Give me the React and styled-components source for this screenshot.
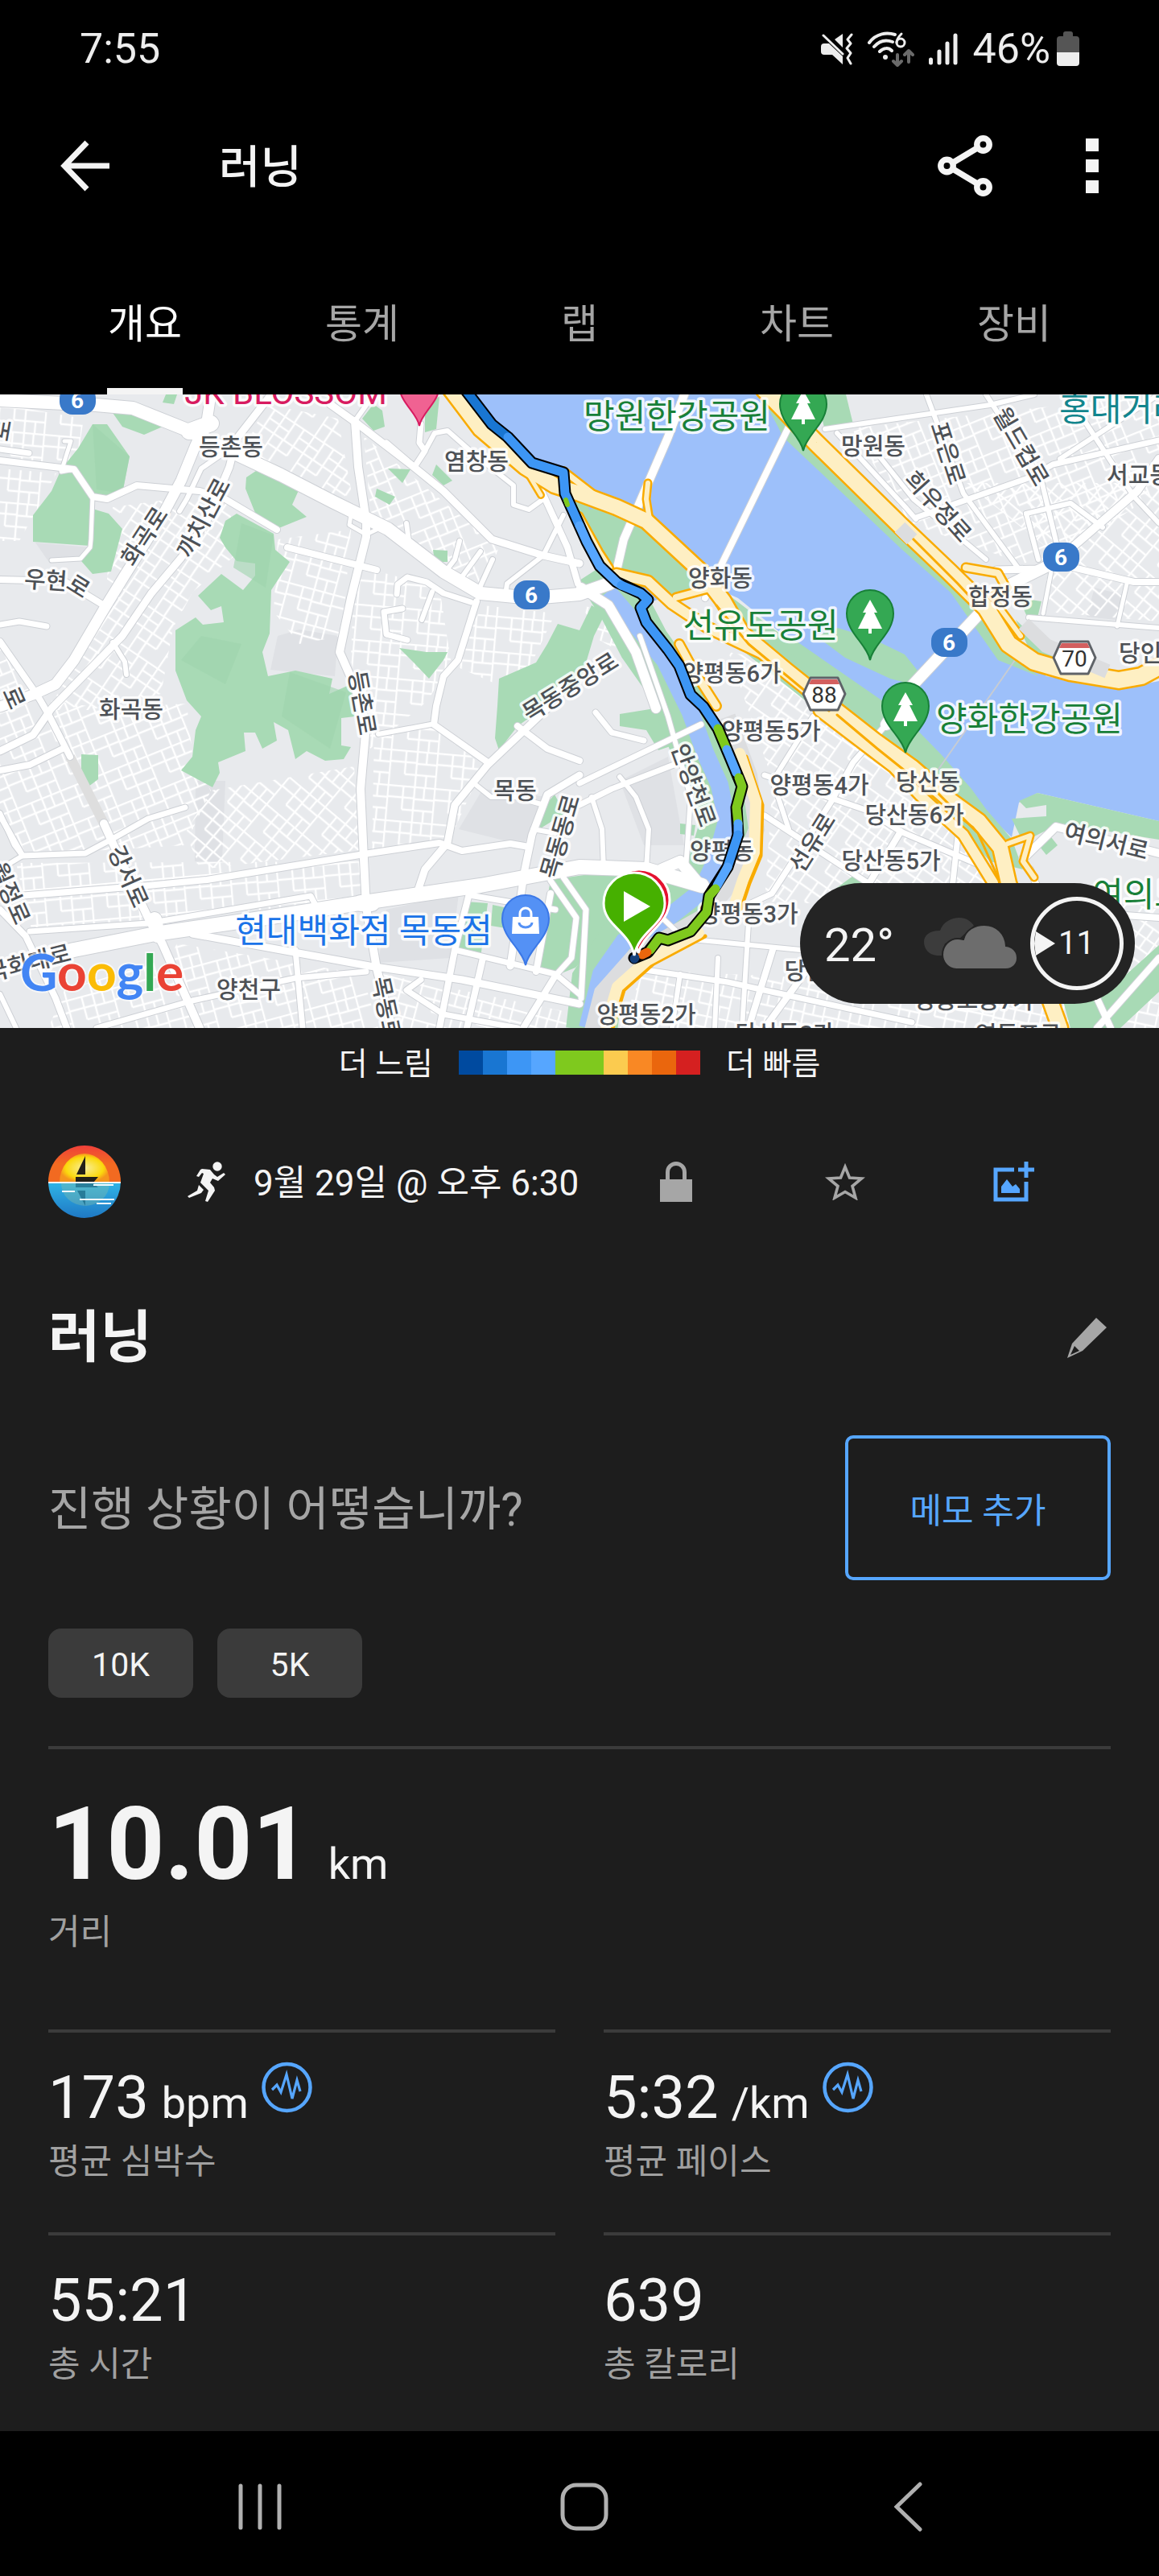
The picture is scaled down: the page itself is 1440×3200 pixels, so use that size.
import React, { useState } from "react";
import styled, { createGlobalStyle } from "styled-components";

const GlobalStyle = createGlobalStyle`
  *, *::before, *::after { box-sizing: border-box; }
  body {
    margin: 0;
    background: #000;
    color: #f4f4f4;
    font-family: Roboto, "Noto Sans CJK KR", sans-serif;
  }
  button { border: 0; padding: 0; background: none; color: inherit; font: inherit; cursor: pointer; }
  h1, h2, p, dl, dt, dd { margin: 0; font-weight: 400; }
  svg { display: block; flex: none; }
`;

const Screen = styled.div`
  display: flex;
  flex-direction: column;
  background: #1d1d1d;
`;

/* ---------- top chrome ---------- */

const Top = styled.header`
  background: #000;
`;

const StatusBar = styled.div`
  display: flex;
  align-items: center;
  justify-content: space-between;
  height: 122px;
  padding: 0 99px;
  font-size: 52px;
  line-height: 60px;
  color: #ededed;
`;

const StatusIcons = styled.div`
  display: flex;
  align-items: center;
  gap: 18px;
`;

const Charge = styled.span`
  display: flex;
  align-items: center;
  gap: 8px;
`;

const AppBar = styled.div`
  display: flex;
  align-items: center;
  height: 168px;
  padding: 0 75px 0 70px;
`;

const AppTitle = styled.h1`
  flex: 1;
  margin-left: 134px;
  padding-top: 4px;
  font-size: 56px;
  font-weight: 500;
  line-height: 72px;
`;

const IconButton = styled.button`
  display: flex;
  align-items: center;
  justify-content: center;
`;

const BarActions = styled.div`
  display: flex;
  align-items: center;
  gap: 116px;
`;

const Tabs = styled.nav`
  display: grid;
  grid-template-columns: repeat(5, 1fr);
  height: 200px;
  padding: 0 45px;
`;

const Tab = styled.button`
  display: flex;
  justify-content: center;
  font-size: 50px;
  color: ${(p) => (p.$active ? "#fff" : "#a6a6a6")};

  span {
    display: flex;
    align-items: center;
    padding: 24px 1px 0;
    border-bottom: 8px solid ${(p) => (p.$active ? "#f4f4f4" : "transparent")};
  }
`;

/* ---------- map ---------- */

const MapBox = styled.section`
  position: relative;
  height: 787px;
  overflow: hidden;
  background: #e8eaed;
`;

const MapCanvas = styled.svg`
  width: 100%;
  height: 100%;
`;

const MapLabel = styled.text`
  font-family: Roboto, "Noto Sans CJK KR", sans-serif;
  font-size: ${(p) => (p.$place ? 42 : 29)}px;
  font-weight: ${(p) => (p.$place ? 400 : 500)};
  fill: ${(p) => p.$color || "#4d5156"};
  stroke: #fff;
  stroke-opacity: 0.85;
  stroke-width: 7px;
  stroke-linejoin: round;
  paint-order: stroke;
  text-anchor: ${(p) => p.$anchor || "middle"};
`;

const BadgeText = styled.text`
  font-family: Roboto, sans-serif;
  font-size: 28px;
  font-weight: ${(p) => (p.$bold ? 700 : 400)};
  fill: ${(p) => p.$color};
  text-anchor: middle;
`;

const Wordmark = styled.text`
  font-family: Lato, sans-serif;
  font-size: 64px;
  font-weight: 700;
  paint-order: stroke;
  stroke: #fff;
  stroke-opacity: 0.6;
  stroke-width: 4px;
`;

const Weather = styled.div`
  position: absolute;
  right: 30px;
  bottom: 30px;
  display: flex;
  align-items: center;
  width: 416px;
  height: 150px;
  padding: 0 14px 0 30px;
  border-radius: 75px;
  background: #242424;
`;

const Temperature = styled.span`
  flex: 1;
  padding-top: 3px;
  font-size: 58px;
  line-height: 68px;
`;

const Wind = styled.div`
  display: flex;
  align-items: center;
  width: 116px;
  height: 116px;
  margin-left: 16px;
  border: 5px solid #f4f4f4;
  border-radius: 50%;
  font-size: 40px;
  line-height: 48px;

  svg { margin-right: 4px; }
`;

/* ---------- details ---------- */

const Legend = styled.div`
  display: flex;
  align-items: center;
  justify-content: center;
  gap: 32px;
  height: 86px;
  font-size: 39px;
  line-height: 56px;

  span { padding-top: 3px; }
`;

const Scale = styled.div`
  display: flex;
  width: 300px;
  height: 30px;
`;

const ScaleStep = styled.i`
  flex: 1;
  background: ${(p) => p.$color};
`;

const Details = styled.main`
  display: flex;
  flex-direction: column;
  padding: 60px 60px 53px;
`;

const MetaRow = styled.div`
  display: flex;
  align-items: center;
  height: 90px;
  padding-right: 15px;
`;

const When = styled.p`
  display: flex;
  align-items: center;
  flex: 1;
  gap: 34px;
  margin-left: 83px;
  font-size: 44px;
  line-height: 64px;
  white-space: nowrap;

  time { padding-top: 3px; }
`;

const MetaActions = styled.div`
  display: grid;
  grid-template-columns: repeat(3, 210px);
`;

const TitleRow = styled.div`
  display: flex;
  align-items: center;
  justify-content: space-between;
  height: 90px;
  margin-top: 104px;
`;

const Title = styled.h2`
  font-size: 70px;
  font-weight: 700;
  line-height: 90px;
`;

const NoteRow = styled.div`
  display: flex;
  align-items: center;
  justify-content: space-between;
  margin-top: 76px;
`;

const Prompt = styled.p`
  padding-top: 4px;
  font-size: 58px;
  line-height: 84px;
  color: #a5a5a5;
`;

const NoteButton = styled.button`
  width: 330px;
  height: 180px;
  border: 4px solid #56a6ff;
  border-radius: 10px;
  font-size: 43px;
  color: #56a6ff;
`;

const Chips = styled.div`
  display: flex;
  gap: 30px;
  margin-top: 60px;
`;

const Chip = styled.button`
  width: 180px;
  height: 86px;
  padding-top: 3px;
  border-radius: 16px;
  background: #3b3b3b;
  font-size: 41px;
`;

const Distance = styled.dl`
  display: flex;
  flex-direction: column-reverse;
  justify-content: flex-end;
  height: 352px;
  margin-top: 60px;
  padding-top: 43px;
  border-top: 4px solid #3b3b3b;
`;

const DistanceValue = styled.dd`
  display: flex;
  align-items: baseline;
  gap: 22px;
  font-size: 126px;
  font-weight: 700;
  line-height: 150px;
`;

const Unit = styled.span`
  font-size: 54px;
  font-weight: 400;
  line-height: 60px;
`;

const Caption = styled.dt`
  margin-top: 4px;
  font-size: 43px;
  line-height: 60px;
  color: #a0a0a0;
`;

const Metrics = styled.dl`
  display: grid;
  grid-template-columns: 1fr 1fr;
  gap: 58px 60px;
`;

const Metric = styled.div`
  display: flex;
  flex-direction: column-reverse;
  padding-top: 36px;
  border-top: 4px solid #3b3b3b;
`;

const MetricValue = styled.dd`
  display: flex;
  align-items: baseline;
  gap: 16px;
  font-size: 74px;
  line-height: 90px;

  svg { align-self: flex-start; }
`;

const NavBar = styled.nav`
  display: grid;
  grid-template-columns: repeat(3, 1fr);
  height: 180px;
  padding: 8px 110px 0 122px;
  background: #000;
`;

/* ---------- map data ---------- */

const blocks = [
  ["g5", "0,12 104,30 95,88 0,78"],
  ["g5", "0,92 70,98 42,150 24,182 0,182"],
  ["gm58", "140,140 228,128 285,134 292,200 240,245 215,290 200,372 110,392 60,392 130,268"],
  ["gm20", "0,310 60,380 130,390 232,384 240,455 262,492 230,560 30,572 0,530"],
  ["g40", "262,492 440,462 446,566 250,590 230,545"],
  ["gm5", "20,582 448,580 450,628 40,668"],
  ["gm15", "220,682 450,720 470,787 60,787 80,740 210,700"],
  ["g15", "345,180 436,168 425,300 372,310 340,270"],
  ["gm58", "330,12 420,30 442,150 300,76"],
  ["gm20", "452,52 620,190 600,240 462,165"],
  ["g5", "440,212 546,240 560,330 532,380 460,440 436,330"],
  ["g5", "465,420 540,412 600,462 558,555 462,568"],
  ["g5", "600,262 690,272 660,335 640,370 560,335"],
  ["g15", "475,720 720,770 720,787 500,787"],
  ["g15", "722,262 760,270 790,330 735,300"],
  ["gm20", "1058,42 1440,0 1440,120 1320,200 1270,210 1130,160"],
  ["g40", "1200,110 1440,110 1440,282 1300,270 1300,190"],
  ["g35", "905,320 960,330 1070,420 1225,590 1225,640 950,630 960,480"],
  ["g12", "800,715 1440,745 1440,787 770,787"],
  ["g35", "1300,610 1440,640 1440,720 1300,720"],
];

const shades = [
  "44,184 112,190 100,206 62,210",
  "345,300 372,292 420,300 416,350 336,342",
  "243,480 280,480 276,580 242,580",
  "480,640 570,620 560,700 470,706",
  "600,490 680,500 650,560 570,540",
  "770,480 830,450 850,560 800,560",
  "1360,240 1400,250 1386,280 1350,276",
];

const parks = [
  "115,37 133,37 161,77 152,123 133,130 118,126 115,142 135,148 152,167 138,220 115,223 101,207 112,188 41,183 41,150 64,120 76,93 97,67",
  "138,20 170,23 202,40 179,50 152,40",
  "321,93 363,110 372,117 363,137 381,152 344,167 317,147 305,117 306,103",
  "294,148 340,173 342,193 360,208 337,243 335,297 326,320 333,350 367,343 413,353 409,372 436,360 441,400 424,402 424,436 436,438 427,453 404,455 381,443 367,453 358,417 340,407 344,430 326,440 317,420 303,420 305,443 271,457 273,470 264,488 225,467 239,450 243,417 250,400 232,380 218,343 218,293 243,277 252,286 278,283 275,263 262,268 246,250 275,223 302,243 317,225 317,210 294,207 280,190 273,178 280,157",
  "206,0 220,0 216,12 202,10",
  "464,12 475,20 478,40 464,45 450,30",
  "482,92 510,93 500,110",
  "468,117 491,127 484,137 466,127",
  "542,87 562,107 551,113 537,100",
  "528,8 546,3 542,43 528,47",
  "496,315 530,320 556,320 551,330 533,353 514,333",
  "538,193 556,194 556,208 540,208",
  "693,285 720,293 735,262 752,272 738,300 720,360 660,400 643,412 620,442 615,427 618,387 620,353 666,333 680,310",
  "684,603 760,592 830,620 800,655 735,690 715,712 690,722 668,712 676,650",
  "579,630 606,632 597,700 565,693 569,657",
  "612,634 640,640 634,664 610,660",
  "101,447 122,448 122,478 110,487 101,470",
  "689,497 702,520 670,540 675,513",
  "770,397 826,388 845,433 818,442 803,417 770,412",
  "845,533 864,535 862,548 845,546",
  "1014,0 1051,0 1060,37 1025,45",
  "1266,253 1294,257 1289,277 1276,276",
  "1262,280 1312,326 1285,330",
  "1320,750 1400,720 1440,684 1440,742 1392,787 1330,787",
  "1030,620 1060,598 1090,620",
  "1292,562 1306,550 1314,560 1300,572",
];

const roads = [
  [16, "0,7 119,13 165,17 230,43 285,70 349,100 413,133 482,167 551,220 597,247 661,253 720,248 757,235"],
  [20, "235,46 262,36"],
  [13, "262,0 257,33 243,63 225,107 202,150 156,223 129,267 92,330 69,360 41,373 0,388"],
  [9, "340,-4 294,55 285,90 257,157 225,203 188,247 152,300 110,343 64,390 41,423 0,443"],
  [8, "0,82 92,93 115,127 133,130 170,113 248,120 280,130 344,168"],
  [5, "92,93 76,96 88,58 80,58"],
  [7, "0,68 36,73"],
  [5, "115,127 113,180 112,190 100,204 64,206"],
  [8, "0,230 80,232 129,262"],
  [7, "0,286 24,282 58,288"],
  [6, "276,74 250,92 232,130 223,145"],
  [6, "140,308 155,332 157,348"],
  [10, "441,33 445,90 455,157 455,177 436,253 422,320 441,363 455,410 448,490 452,577 455,637 468,713 487,787"],
  [20, "448,632 462,632"],
  [8, "357,190 468,218"],
  [5, "436,150 434,162 455,174 474,165"],
  [18, "0,712 92,690 193,670 331,650 459,630 597,610 720,587 803,590 872,610"],
  [8, "23,623 184,610 257,603 459,570 546,557 574,567 634,558 657,562"],
  [9, "410,12 445,37 514,90 551,120 611,180 675,200 720,210"],
  [7, "523,37 521,60 528,70 515,90 480,60"],
  [6, "528,70 540,48 556,45 590,75 638,113 638,137 657,143 675,130"],
  [6, "441,33 468,-5"],
  [8, "672,118 705,190 718,235"],
  [6, "700,150 675,200 630,235 628,250"],
  [6, "505,160 508,182"],
  [6, "571,182 565,205 555,218"],
  [6, "612,205 596,240"],
  [6, "597,195 570,232"],
  [7, "493,248 494,236 506,227 530,233 551,247 585,258"],
  [6, "537,245 524,280"],
  [7, "500,266 477,270 480,298 506,305"],
  [8, "592,257 569,330 551,350 542,387 539,410 606,457"],
  [6, "470,422 535,410"],
  [9, "700,360 680,390 606,460 565,510 556,557 528,590 519,617"],
  [8, "643,412 680,440 720,455"],
  [9, "720,473 680,497 661,547 652,590 634,710"],
  [6, "590,484 610,500 640,500 676,510"],
  [6, "662,540 690,545"],
  [8, "684,620 666,717"],
  [8, "60,397 87,450"],
  [8, "0,307 46,373 60,397"],
  [10, "129,533 138,553 184,650 202,683 248,787"],
  [18, "192,652 196,672"],
  [8, "0,467 37,460 78,440"],
  [7, "0,523 28,573 106,570 138,553 184,527 230,513"],
  [6, "0,520 18,560 28,573 0,590"],
  [8, "0,640 32,673 69,750 83,787"],
  [6, "0,745 20,787"],
  [7, "37,667 184,657 386,623 395,640"],
  [9, "239,670 459,710 574,727 720,757"],
  [7, "120,787 239,753 367,725 455,717"],
  [7, "367,690 376,787"],
  [8, "583,620 565,690 546,787"],
  [7, "583,622 690,640"],
  [7, "565,690 690,720 720,745"],
  [8, "600,700 580,787"],
  [7, "523,727 505,740 551,770 643,787"],
  [8, "690,722 650,787"],
  [7, "690,722 710,700 716,650 684,604"],
  [7, "722,750 728,640 700,600"],
  [7, "720,483 871,410"],
  [7, "720,510 760,490 850,455"],
  [6, "770,475 790,500 806,540 803,590"],
  [6, "735,500 748,540 750,590"],
  [7, "740,395 760,420 800,430"],
  [6, "795,300 830,400 858,500 852,590"],
  [12, "722,240 756,262 790,320 815,390"],
  [14, "822,590 845,580 870,610"],
  [7, "788,713 904,730 995,750 1133,780"],
  [6, "812,640 850,676 995,690"],
  [7, "931,633 959,620 1032,507 1060,457 1101,410"],
  [8, "1119,543 1074,617 950,787"],
  [7, "950,473 1078,517 1119,543 1230,590"],
  [7, "950,523 1083,610"],
  [6, "931,640 922,787"],
  [6, "980,540 960,480 1010,400"],
  [6, "845,720 835,787"],
  [6, "892,700 888,787"],
  [8, "960,690 930,787"],
  [7, "1190,550 1180,640"],
  [10, "1271,577 1312,537 1440,570"],
  [8, "1280,590 1300,640 1440,650"],
  [8, "1340,700 1380,787"],
  [8, "1440,700 1363,787"],
  [10, "1440,80 1413,120 1317,203"],
  [8, "1312,210 1409,233 1440,233"],
  [6, "1025,43 1230,13 1285,0"],
  [7, "1138,153 1280,103 1308,87 1440,57"],
  [6, "1225,0 1294,107 1317,203"],
  [6, "1151,0 1197,123 1266,217"],
  [6, "1087,70 1135,130 1225,205"],
  [6, "1040,48 1125,140 1138,155"],
  [6, "1326,0 1409,127 1440,160"],
  [6, "1317,80 1440,0"],
  [6, "1275,148 1330,135 1370,165"],
  [6, "1275,148 1290,205"],
  [6, "1278,277 1440,290"],
  [5, "1296,272 1306,220"],
  [5, "1400,235 1388,288"],
  [9, "1238,218 1290,217 1312,208"],
  [10, "851,-2 830,53 775,180 764,228"],
  [8, "985,30 876,253"],
  [14, "1312,208 1257,235 1216,273 1133,362 1101,410"],
];

const highways = [
  [18, "560,-6 597,43 652,90 689,113 720,123 766,140 803,157 871,220 899,257 922,297 977,343 1032,387 1087,430 1133,463 1179,503 1216,530 1243,563 1253,607 1294,723 1317,787"],
  [7, "700,95 735,122 760,140"],
  [6, "805,110 803,130 807,155 876,235"],
  [12, "766,223 805,232 835,260 880,290 950,323"],
  [8, "840,252 885,240 905,262"],
  [12, "1018,393 1060,425 1110,463 1142,497 1197,547 1234,607"],
  [9, "844,310 862,343 890,387"],
  [5, "648,85 672,125"],
  [5, "720,150 745,195 758,215"],
  [20, "950,-6 1014,60 1119,163 1179,220 1225,265 1253,310 1285,332 1330,345 1390,355 1418,350 1440,338"],
  [8, "1200,215 1240,222 1250,240 1235,250"],
  [6, "1216,265 1240,262 1268,300"],
  [6, "1252,558 1280,548 1271,580 1285,600"],
];

const sideRoads = [
  "927,450 947,510 945,573 931,607 920,640",
  "876,673 812,707 775,740 761,787",
];

const route =
  "578,-6 611,37 631,53 661,85 700,97 702,123 720,163 729,183 745,213 766,233 796,247 805,255 796,265 803,283 830,317 844,337 858,373 874,388 892,415 908,453 922,487 915,513 917,547 904,587 881,623 878,643 858,667 830,678 819,675 805,693 788,700";

const paceRuns = [
  ["#1976d2", "578,-6 611,37 631,53"],
  ["#3d96f5", "631,53 661,85 700,97 702,123 720,163"],
  ["#56a6ff", "720,163 729,183 745,213 766,233 772,237"],
  ["#3d96f5", "772,237 796,247 805,255 796,265 803,283 830,317 844,337 858,373 874,388 892,415"],
  ["#7fc91e", "892,415 903,441"],
  ["#56a6ff", "903,441 908,453 915,470"],
  ["#7fc91e", "918,476 922,487 915,513 917,533"],
  ["#56a6ff", "917,533 917,547"],
  ["#3d96f5", "917,547 904,587"],
  ["#56a6ff", "904,587 891,610"],
  ["#7fc91e", "889,614 881,623 878,643 858,667 830,678 819,675 808,690"],
  ["#ea660d", "804,693 798,696"],
  ["#16407a", "789,700 788,701"],
];

const areaLabels = [
  ["등촌동", 287, 76], ["염창동", 592, 94], ["망원동", 1085, 75], ["합정동", 1243, 262],
  ["양화동", 895, 239], ["양평동6가", 909, 357], ["양평동5가", 958, 429], ["양평동4가", 1018, 496],
  ["당산동", 1153, 492], ["당산동6가", 1136, 533], ["당산동5가", 1107, 590], ["양평동", 897, 578],
  ["양평동3가", 930, 656], ["양평동2가", 803, 781], ["당산동3가", 975, 805], ["영등포동7가", 1210, 763],
  ["영등포구", 1265, 806], ["화곡동", 163, 402], ["목동", 640, 503], ["양천구", 309, 750],
  ["당산동4가", 1036, 727], ["서교동", 1415, 111], ["당인동", 1430, 332],
];

const streetLabels = [
  ["화곡로", 188, 182, -57], ["까치산로", 262, 158, -62], ["우현", 56, 241, 4], ["로", 92, 247, 32],
  ["등촌로", 440, 385, 80], ["강서로", 150, 603, 66], ["목동중앙로", 714, 372, -32],
  ["목동동로", 706, 552, -74], ["목동로", 470, 765, 78], ["안양천로", 852, 489, 70],
  ["선유로", 1018, 562, -58], ["여의서로", 1372, 565, 14], ["월드컵로", 1260, 70, 60],
  ["포은로", 1168, 76, 72], ["희우정로", 1158, 146, 48], ["월정로", 3, 624, 66],
  ["국회대로", 38, 716, -14], ["로", 8, 381, 66], ["로", 12, 46, -80],
];

const places = [
  ["JK BLOSSOM", 355, 12, "#d81b60"],
  ["망원한강공원", 841, 42, "#188038"],
  ["선유도공원", 945, 302, "#188038"],
  ["양화한강공원", 1279, 418, "#188038"],
  ["현대백화점 목동점", 452, 681, "#1a73e8"],
];

const paceScale = ["#004a9f", "#1976d2", "#3d96f5", "#56a6ff", "#7fc91e", "#7fc91e", "#fbcb4f", "#f98824", "#ea660d", "#d52020"];

const gridAngles = { g5: 5, g12: 12, g15: 15, g35: 35, g40: 40, gm5: -5, gm15: -15, gm20: -22, gm58: -56 };

function ParkPin({ x, y }) {
  return (
    <g transform={`translate(${x} ${y})`}>
      <path d="M0 0C-4-20-29-34-29-58a29 29 0 0 1 58 0C29-34 4-20 0 0Z" fill="#34a853" stroke="#188038" strokeWidth="2" />
      <path d="M0-75 9-59H5L15-39H2v6h-4v-6h-13L-5-59h-4Z" fill="#fff" />
    </g>
  );
}

function SubwayBadge({ x, y }) {
  return (
    <g transform={`translate(${x} ${y})`}>
      <rect x="-22" y="-18" width="45" height="36" rx="16" fill="#3979c9" />
      <BadgeText y="10" $bold $color="#fff">6</BadgeText>
    </g>
  );
}

function Shield({ x, y, label }) {
  return (
    <g transform={`translate(${x} ${y})`}>
      <path d="M-17-20H17L26 0 17 20H-17L-26 0Z" fill="#fff" stroke="#5f6368" strokeWidth="3" strokeLinejoin="round" />
      <path d="M-16-18H16L19-12H-19Z" fill="#d35f5f" />
      <BadgeText y="11" $color="#333">{label}</BadgeText>
    </g>
  );
}

function RouteMap() {
  return (
    <MapCanvas viewBox="0 0 1440 787" preserveAspectRatio="xMidYMid slice" role="img" aria-label="러닝 경로 지도">
      <defs>
        {Object.entries(gridAngles).map(([id, angle]) => (
          <pattern key={id} id={id} width="58" height="44" patternUnits="userSpaceOnUse" patternTransform={`rotate(${angle})`}>
            <path d="M0 1H58M0 15H34M20 30H58M1 0V44M20 0V30M34 1V44M47 30V44M46 1V15M34 16H58" fill="none" stroke="#fff" strokeWidth="2.4" />
          </pattern>
        ))}
      </defs>
      <rect width="1440" height="787" fill="#e8eaed" />
      {shades.map((d) => <polygon key={d} points={d} fill="#dfe1e5" />)}
      {blocks.map(([id, d]) => <polygon key={d} points={d} fill={`url(#${id})`} />)}
      {parks.map((d) => <polygon key={d} points={d} fill="#a8dab5" />)}
      <path d="M115 37 161 77 152 123 120 118ZM300 160 340 175 330 240 290 215ZM250 300 300 310 280 360 225 330ZM360 345 430 370 410 440 350 400Z" fill="#9fd3ad" opacity=".6" />

      {/* river, its banks and the island */}
      <path d="M588 0H972L1120 190 1257 310 1300 350 1390 366 1440 356V530L1289 495 1266 507 1257 550 1110 410 917 253 870 232 800 262 770 240 700 130 660 90Z" fill="#9dc0fa" />
      <path d="M945 0H975L1014 50 1119 160 1253 318 1290 350 1240 330 1179 243 1120 190 972 50Z" fill="#a8dab5" />
      <path d="M950 0 972 52 1120 192 1180 245 1262 335 1210 240 1010 40Z" fill="#a8dab5" />
      <path d="M724 147 745 138 798 160 871 217 895 230 876 246 840 254 807 238 766 220 748 197Z" fill="#a8dab5" />
      <path d="M705 110 722 112 735 150 760 215 740 215 712 160Z" fill="#a8dab5" />
      <path d="M900 245 959 290 1041 347 1110 392 1133 410 1170 448 1207 490 1225 515 1257 552 1271 590 1230 580 1130 470 1000 380 900 300Z" fill="#a8dab5" />
      <path d="M1014 300 1041 290 1083 303 1124 323 1140 343 1133 360 1106 353 1050 327ZM940 290 980 300 1110 390 1060 380Z" fill="#a8dab5" />
      <path d="M1257 527 1300 524 1300 510 1275 514 1266 505 1289 495 1440 530V553L1317 533 1271 556Z" fill="#a8dab5" />

      {/* stream */}
      <path d="M745 215 775 262 800 310 835 360 862 430 892 480 900 540 882 600 830 648 775 680 742 730 735 790" fill="none" stroke="#a8dab5" strokeWidth="64" />
      <path d="M755 245 789 285 826 330 858 395 876 445 894 485 903 530 890 577 872 617 830 650 775 680 747 720 730 787" fill="none" stroke="#9dc0fa" strokeWidth="22" />
      <path d="M904 400 931 473 940 540 917 597 872 650 789 697 748 743 736 790" fill="none" stroke="#dcdddf" strokeWidth="20" />
      <path d="M87 450 129 533" stroke="#dedede" strokeWidth="12" />
      <path d="M1266 323 1165 467" stroke="#c7ccd3" strokeWidth="2" />

      <g fill="none" strokeLinejoin="round" strokeLinecap="round">
        {roads.map(([w, d]) => <polyline key={d} points={d} stroke="#cdd0d5" strokeWidth={w + 2} />)}
        {roads.map(([w, d]) => <polyline key={d} points={d} stroke="#fff" strokeWidth={w} />)}
        {sideRoads.map((d) => <polyline key={d} points={d} stroke="#f9ab00" strokeWidth="5" />)}
        {sideRoads.map((d) => <polyline key={d} points={d} stroke="#feefc3" strokeWidth="14" transform="translate(-8 -4)" />)}
        {highways.map(([w, d]) => <polyline key={d} points={d} stroke="#f9ab00" strokeWidth={w + 5} />)}
        {highways.map(([w, d]) => <polyline key={d} points={d} stroke="#feefc3" strokeWidth={w} />)}
        <path d="M890 262 930 310 1030 393M1040 398 1090 440 1140 480M1130 175 1190 235 1215 262M1150 480 1215 545 1240 600" stroke="#f9ab00" strokeWidth="3" />
      </g>
      <path d="M1118 165 1133 180M1272 285 1300 312 1376 344" fill="none" stroke="#dcdddf" strokeWidth="18" />

      {streetLabels.map(([t, x, y, a]) => (
        <MapLabel key={t + x} transform={`translate(${x} ${y}) rotate(${a})`}>{t}</MapLabel>
      ))}
      {areaLabels.map(([t, x, y]) => <MapLabel key={t + x} x={x} y={y}>{t}</MapLabel>)}
      {places.map(([t, x, y, c]) => <MapLabel key={t} x={x} y={y} $place $color={c}>{t}</MapLabel>)}
      <MapLabel x="1316" y="33" $place $anchor="start" $color="#12858d">홍대거리</MapLabel>
      <MapLabel x="1357" y="636" $place $anchor="start" $color="#188038">여의도</MapLabel>

      <SubwayBadge x={96} y={7} />
      <SubwayBadge x={660} y={249} />
      <SubwayBadge x={1318} y={202} />
      <SubwayBadge x={1179} y={308} />
      <Shield x={1335} y={327} label="70" />
      <Shield x={1024} y={372} label="88" />

      <ParkPin x={998} y={70} />
      <ParkPin x={1081} y={330} />
      <ParkPin x={1125} y={445} />
      <path d="M521 39C518 22 496 10 496-12H546C546 10 524 22 521 39Z" fill="#f06292" stroke="#d81b60" strokeWidth="2" />
      <g transform="translate(653 709)">
        <path d="M0 0C-4-20-29-34-29-58a29 29 0 0 1 58 0C29-34 4-20 0 0Z" fill="#5491f5" stroke="#3b78e7" strokeWidth="2" />
        <path d="M-16-60H16L17-39H-17Z" fill="#fff" />
        <path d="M-7-58v-6a7 7 0 0 1 14 0v6" fill="none" stroke="#fff" strokeWidth="3" />
        <path d="M-8-53a8 6 0 0 0 16 0" fill="none" stroke="#5491f5" strokeWidth="3" />
      </g>

      <g fill="none" strokeLinejoin="round" strokeLinecap="round">
        <polyline points={route} stroke="#000" strokeWidth="15" />
        {paceRuns.map(([c, d]) => <polyline key={d} points={d} stroke={c} strokeWidth="11" />)}
        <path d="M703 131l2 6" stroke="#7fc91e" strokeWidth="6" />
      </g>

      <path d="M793 694C789 668 756 658 756 628a38 38 0 0 1 76 0c0 30-32 40-39 66Z" fill="#e4122f" stroke="#fff" strokeWidth="3" />
      <path d="M788 697C782 666 750 660 750 632a38 38 0 0 1 76 0c0 28-32 34-38 65Z" fill="#46b000" stroke="#fff" strokeWidth="3" />
      <path d="M775 617 808 636 775 655Z" fill="#fff" />

      <Wordmark x="25" y="741">
        <tspan fill="#4285f4">G</tspan><tspan fill="#ea4335">o</tspan><tspan fill="#fbbc05">o</tspan>
        <tspan fill="#4285f4">g</tspan><tspan fill="#34a853">l</tspan><tspan fill="#ea4335">e</tspan>
      </Wordmark>
    </MapCanvas>
  );
}

/* ---------- icons ---------- */

const MuteIcon = () => (
  <svg width="40" height="40" viewBox="0 0 40 40" fill="#ededed">
    <path d="M0 17a4 4 0 0 1 4-4h6L27 29v10L14 27H4a4 4 0 0 1-4-4ZM17 8 27 1V18Z" />
    <path d="M3 3 27 26M38 2l-5 6 4 5-5 6 5 6-4 6 4 7" fill="none" stroke="#ededed" strokeWidth="3" strokeLinecap="round" strokeLinejoin="round" />
  </svg>
);

const WifiIcon = () => (
  <svg width="58" height="44" viewBox="0 0 58 44" fill="none" strokeLinecap="round" strokeLinejoin="round">
    <path d="M2 14C11 2 24 1 34 4M8 19c7-8 15-9 23-6M15 25c5-5 11-5 15-1" stroke="#ededed" strokeWidth="4" />
    <circle cx="22" cy="32" r="3" fill="#ededed" />
    <path d="M42 3c-4 4-6 8-6 11" stroke="#ededed" strokeWidth="3" />
    <circle cx="41" cy="14" r="5" stroke="#ededed" strokeWidth="3" />
    <path d="M37 29v12M32 37l5 5 5-5M51 38V25M46 29l5-5 5 5" stroke="#6a6a6a" strokeWidth="4" />
  </svg>
);

const SignalIcon = () => (
  <svg width="36" height="40" viewBox="0 0 36 40" stroke="#ededed" strokeWidth="5" strokeLinecap="round">
    <path d="M2.500 33v4M13 23v14M23 13v24M33 3v34" />
  </svg>
);

const BatteryIcon = () => (
  <svg width="28" height="44" viewBox="0 0 28 44">
    <path d="M8 3a3 3 0 0 1 3-3h6a3 3 0 0 1 3 3v3h4a4 4 0 0 1 4 4v17H0V10a4 4 0 0 1 4-4h4Z" fill="#555" />
    <path d="M0 26h28v13a4 4 0 0 1-4 4H4a4 4 0 0 1-4-4Z" fill="#ededed" />
  </svg>
);

const BackArrow = () => (
  <svg width="68" height="64" viewBox="0 0 68 64" fill="none" stroke="#f4f4f4" strokeWidth="7">
    <path d="M38 3 10 32 38 61M11 32H66" />
  </svg>
);

const ShareIcon = () => (
  <svg width="68" height="76" viewBox="0 0 68 76" fill="none" stroke="#f4f4f4" strokeWidth="7.5">
    <circle cx="56.500" cy="11.500" r="7.700" />
    <circle cx="11.500" cy="38" r="7.700" />
    <circle cx="56.500" cy="64.500" r="7.700" />
    <path d="M19 34 49 16M19 42 49 60" />
  </svg>
);

const MoreIcon = () => (
  <svg width="16" height="70" viewBox="0 0 16 70" fill="#f4f4f4">
    <path d="M0 1h16v16H0zM0 27h16v16H0zM0 53h16v16H0z" />
  </svg>
);

const CloudIcon = () => (
  <svg width="116" height="64" viewBox="0 0 116 64">
    <path d="M16 47C6 46 0 39 0 30 0 22 7 16 20 16 24 5 34 0 44 0 52 0 58 4 62 10L44 26 26 32 22 47Z" fill="#3c3c3c" />
    <path d="M40 64A18 18 0 0 1 23 46C23 34 32 26 42 26 46 26 48 27 49 27 52 15 63 9 75 9 90 9 101 20 102 35 110 36 116 42 116 50 116 58 110 64 102 64Z" fill="#6d6d6d" stroke="#242424" strokeWidth="2" />
  </svg>
);

const Avatar = () => (
  <svg width="90" height="90" viewBox="0 0 90 90" role="img" aria-label="프로필">
    <defs>
      <clipPath id="disc"><circle cx="45" cy="45" r="45" /></clipPath>
      <linearGradient id="sky" x2="0" y2="1"><stop stopColor="#f0403a" /><stop offset=".5" stopColor="#f26a21" /></linearGradient>
      <linearGradient id="sea" x2="0" y2="1"><stop stopColor="#2fb4e6" /><stop offset="1" stopColor="#1f78c4" /></linearGradient>
      <radialGradient id="sun"><stop stopColor="#f9ee9c" /><stop offset=".75" stopColor="#fbd90d" /><stop offset="1" stopColor="#f5951d" /></radialGradient>
    </defs>
    <g clipPath="url(#disc)">
      <rect width="90" height="46" fill="url(#sky)" />
      <rect y="46" width="90" height="44" fill="url(#sea)" />
      <path d="M14 46a31 36 0 0 1 62 0Z" fill="url(#sun)" />
      <path d="M16 47a30 28 0 0 0 60 0Z" fill="#8fc4a4" opacity=".35" />
      <path d="M46 13V36H35ZM34 39H62L56 46H34Z" fill="#242018" />
      <path d="M34 47H56L62 52H34ZM36 56H46V75Z" fill="#1c6c8a" opacity=".75" />
      <path d="M0 46H90M56 49H81M17 57H33M39 67H82M60 72H78" stroke="#f3fbff" strokeWidth="1.800" />
    </g>
  </svg>
);

const Runner = () => (
  <svg width="48" height="50" viewBox="0 0 48 50" fill="#f4f4f4">
    <circle cx="37" cy="6" r="5.700" />
    <path d="M18 9 28 10 33 16 37 19 45 14 47 16 38 24 31 21 28 26 33 32 34 36 25 50 22 49 26 36 16 26 20 15 18 14 14 19 11 18 16 10Z" />
    <path d="M14 29 20 35 17 39 2 45 0 43 12 36Z" />
  </svg>
);

const LockIcon = () => (
  <svg width="40" height="50" viewBox="0 0 40 50">
    <path d="M0 22H40V50H0Z" fill="#a6a6a6" />
    <path d="M9.500 24V13a10.500 10.500 0 0 1 21 0V24" fill="none" stroke="#a6a6a6" strokeWidth="5" />
  </svg>
);

const StarIcon = () => (
  <svg width="50" height="46" viewBox="0 0 50 46">
    <path d="M25 4.500 30.500 18 45.500 19 34 28.500 38 43 25 35.500 12 43 16 28.500 4.500 19 19.500 18Z" fill="none" stroke="#a6a6a6" strokeWidth="3.600" />
  </svg>
);

const AddImageIcon = () => (
  <svg width="52" height="52" viewBox="0 0 52 52">
    <path d="M26 11H3V48H41V26M31 11H51M41 1V21" fill="none" stroke="#56a6ff" strokeWidth="5" />
    <path d="M10 40V32L17 23 24 32 28 29 33 35V40Z" fill="#56a6ff" />
  </svg>
);

const PencilIcon = () => (
  <svg width="54" height="50" viewBox="0 0 54 50">
    <path d="M36 0 49 12 19 41 0 50 6 32ZM9 35 4 46 15 41Z" fill="#a6a6a6" fillRule="evenodd" />
  </svg>
);

const WaveIcon = () => (
  <svg width="63" height="64" viewBox="0 0 63 64" fill="none" stroke="#56a6ff">
    <circle cx="31.500" cy="32" r="29" strokeWidth="4.500" />
    <path d="M13 35 19 29 24 38 31 16 38 46 44 23 48 37" strokeWidth="3.200" />
  </svg>
);

const RecentsIcon = () => (
  <svg width="56" height="58" viewBox="0 0 56 58" stroke="#b0b0b0" strokeWidth="5" strokeLinecap="round">
    <path d="M4 3V55M28 3V55M52 3V55" />
  </svg>
);

const HomeIcon = () => (
  <svg width="60" height="60" viewBox="0 0 60 60" fill="none" stroke="#b0b0b0" strokeWidth="5">
    <rect x="3" y="3" width="54" height="54" rx="17" />
  </svg>
);

const ChevronIcon = () => (
  <svg width="36" height="62" viewBox="0 0 36 62" fill="none" stroke="#b0b0b0" strokeWidth="5" strokeLinecap="round">
    <path d="M32 3 3 31 32 59" />
  </svg>
);

/* ---------- page ---------- */

const tabs = ["개요", "통계", "랩", "차트", "장비"];

const metrics = [
  { value: "173", unit: "bpm", label: "평균 심박수", chart: true },
  { value: "5:32", unit: "/km", label: "평균 페이스", chart: true },
  { value: "55:21", label: "총 시간" },
  { value: "639", label: "총 칼로리" },
];

export default function App() {
  const [active, setActive] = useState("개요");

  return (
    <Screen>
      <GlobalStyle />
      <Top>
        <StatusBar>
          <span>7:55</span>
          <StatusIcons>
            <MuteIcon />
            <WifiIcon />
            <SignalIcon />
            <Charge>46%<BatteryIcon /></Charge>
          </StatusIcons>
        </StatusBar>
        <AppBar>
          <IconButton aria-label="뒤로"><BackArrow /></IconButton>
          <AppTitle>러닝</AppTitle>
          <BarActions>
            <IconButton aria-label="공유"><ShareIcon /></IconButton>
            <IconButton aria-label="더 보기"><MoreIcon /></IconButton>
          </BarActions>
        </AppBar>
        <Tabs>
          {tabs.map((t) => (
            <Tab key={t} $active={t === active} onClick={() => setActive(t)}><span>{t}</span></Tab>
          ))}
        </Tabs>
      </Top>

      <MapBox>
        <RouteMap />
        <Weather>
          <Temperature>22°</Temperature>
          <CloudIcon />
          <Wind>
            <svg width="26" height="30" viewBox="0 0 26 30" fill="#f4f4f4"><path d="M2 0 26 15 2 30 0 15Z" /></svg>
            11
          </Wind>
        </Weather>
      </MapBox>

      <Legend>
        <span>더 느림</span>
        <Scale>
          {paceScale.map((c, i) => <ScaleStep key={i} $color={c} />)}
        </Scale>
        <span>더 빠름</span>
      </Legend>

      <Details>
        <MetaRow>
          <Avatar />
          <When><Runner /><time>9월 29일 @ 오후 6:30</time></When>
          <MetaActions>
            <IconButton aria-label="비공개"><LockIcon /></IconButton>
            <IconButton aria-label="즐겨찾기"><StarIcon /></IconButton>
            <IconButton aria-label="사진 추가"><AddImageIcon /></IconButton>
          </MetaActions>
        </MetaRow>

        <TitleRow>
          <Title>러닝</Title>
          <IconButton aria-label="이름 편집"><PencilIcon /></IconButton>
        </TitleRow>

        <NoteRow>
          <Prompt>진행 상황이 어떻습니까?</Prompt>
          <NoteButton>메모 추가</NoteButton>
        </NoteRow>

        <Chips>
          <Chip>10K</Chip>
          <Chip>5K</Chip>
        </Chips>

        <Distance>
          <Caption>거리</Caption>
          <DistanceValue>10.01<Unit>km</Unit></DistanceValue>
        </Distance>

        <Metrics>
          {metrics.map((m) => (
            <Metric key={m.label}>
              <Caption>{m.label}</Caption>
              <MetricValue>
                <span>{m.value}</span>
                {m.unit && <Unit>{m.unit}</Unit>}
                {m.chart && <WaveIcon />}
              </MetricValue>
            </Metric>
          ))}
        </Metrics>
      </Details>

      <NavBar>
        <IconButton aria-label="최근 앱"><RecentsIcon /></IconButton>
        <IconButton aria-label="홈"><HomeIcon /></IconButton>
        <IconButton aria-label="뒤로 가기"><ChevronIcon /></IconButton>
      </NavBar>
    </Screen>
  );
}
